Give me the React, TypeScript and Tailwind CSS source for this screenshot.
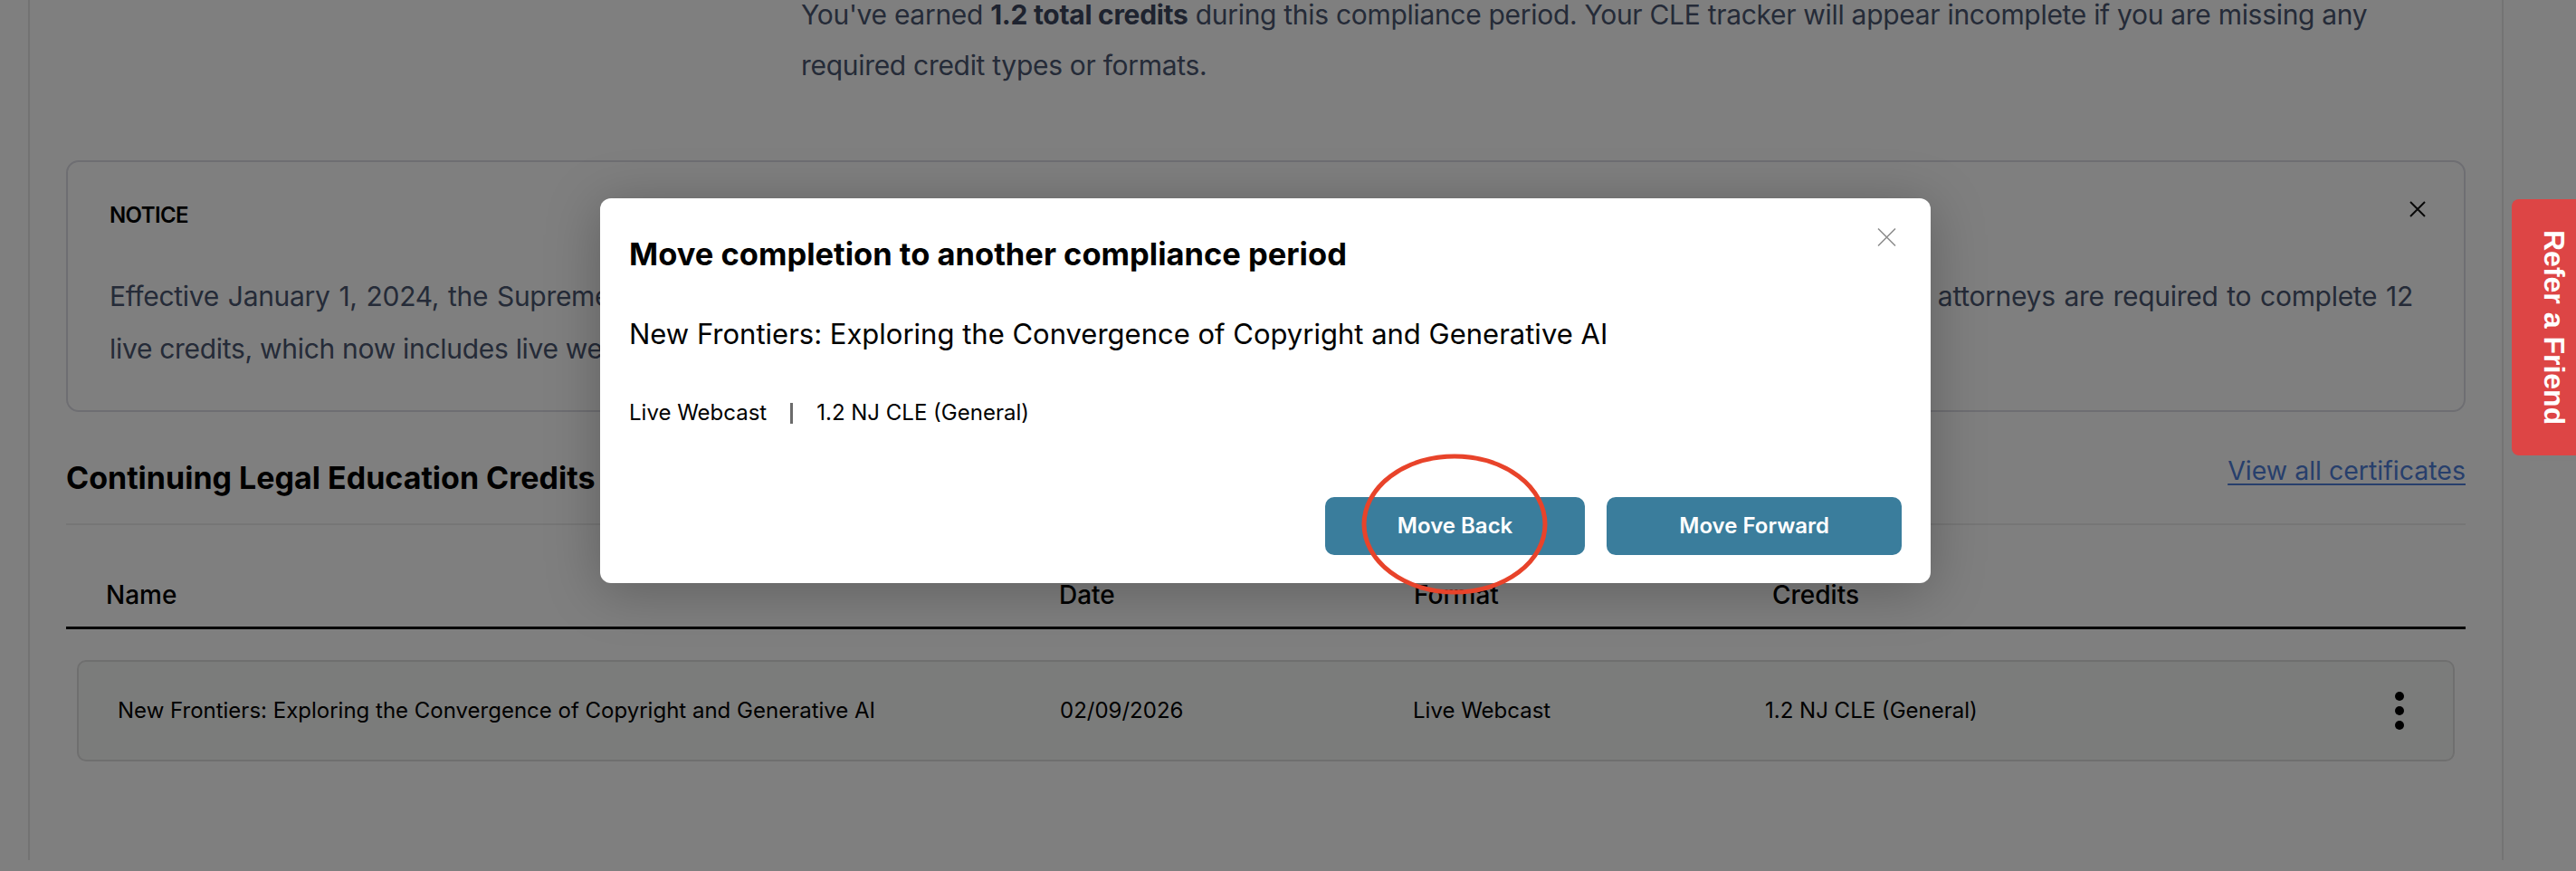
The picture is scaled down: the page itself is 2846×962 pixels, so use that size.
// Credits tracker page with the "move completion" dialog open over it.
export default function App() {
  return (
    <div className="relative h-[962px] w-[2846px] overflow-hidden bg-white font-['Inter',sans-serif] text-black">
      <div className="ml-[31px] h-full w-[2735px] border-x-2 border-[#e6e6e6] px-[40px]">
        <p className="ml-[812px] mt-[-12px] text-[30px] leading-[56px] tracking-[-0.3px] text-[#4a5670]">
          You've earned <span className="font-bold text-[#3d475e]">1.2 total credits</span> during this compliance
          period. Your CLE tracker will appear incomplete if you are missing any required credit types or formats.
        </p>

        <NoticeCard />
        <CreditsSection />
      </div>

      <div className="absolute inset-0 bg-black/50" />

      <MoveDialog />
      <ReferTab />
    </div>
  );
}

function NoticeCard() {
  return (
    <div className="mt-[77px] rounded-[14px] border-2 border-[#dcdce4] pb-[39px] pl-[46px] pr-[41px] pt-[43px]">
      <div className="flex items-start justify-between">
        <div className="text-[24px] font-semibold leading-[32px] tracking-tight">NOTICE</div>
        <svg viewBox="0 0 20 18" className="h-[18px] w-[20px]" fill="none" stroke="#111" strokeWidth="2">
          <path d="M2 1 18 17M18 1 2 17" />
        </svg>
      </div>
      <p className="mr-[15px] mt-[44px] text-[30px] leading-[58px] tracking-[-0.3px] text-[#4a5670]">
        <span className="block [text-align-last:justify]">
          Effective January 1, 2024, the Supreme Court of New Jersey amended its CLE rules for every two-year
          compliance period, and all New Jersey attorneys are required to complete 12
        </span>
        <span className="block">live credits, which now includes live webcasts and other interactive formats.</span>
      </p>
    </div>
  );
}

function CreditsSection() {
  return (
    <div>
      <div className="mt-[45px] flex items-start justify-between border-b-2 border-[#ececec] pb-[28px]">
        <h2 className="mt-[6px] text-[34px] font-bold leading-[44px]">Continuing Legal Education Credits</h2>
        <a className="text-[28.5px] leading-[40px] text-[#4f7fd9] underline underline-offset-4">View all certificates</a>
      </div>

      <div className="mt-[59px] grid grid-cols-[1053px_392px_396px_1fr] border-b-[3px] border-black pb-[17px] pl-[44px] text-[28px] font-medium leading-[36px]">
        <div>Name</div>
        <div>Date</div>
        <div>Format</div>
        <div>Credits</div>
      </div>

      <div className="mx-[12px] mt-[34px] grid h-[112px] grid-cols-[1041px_390px_389px_1fr_auto] items-center rounded-[10px] border-2 border-[#dedede] bg-[#f7f8f7] pl-[43px] pr-[53px] text-[24px]">
        <div>New Frontiers: Exploring the Convergence of Copyright and Generative AI</div>
        <div>02/09/2026</div>
        <div>Live Webcast</div>
        <div>1.2 NJ CLE (General)</div>
        <svg viewBox="0 0 12 44" className="h-[44px] w-[12px]" fill="#000">
          <circle cx="6" cy="6" r="5" />
          <circle cx="6" cy="22" r="5" />
          <circle cx="6" cy="38" r="5" />
        </svg>
      </div>
    </div>
  );
}

function MoveDialog() {
  return (
    <div className="absolute left-[663px] top-[219px] w-[1470px] rounded-[12px] bg-white px-[32px] pb-[31px] pt-[42px] shadow-[0_8px_60px_rgba(0,0,0,0.25)]">
      <svg
        viewBox="0 0 21 20"
        className="absolute right-[38px] top-[33px] h-[20px] w-[21px]"
        fill="none"
        stroke="#8c8c8c"
        strokeWidth="1.5"
      >
        <path d="M1 0.5 20 19.5M20 0.5 1 19.5" />
      </svg>

      <h1 className="text-[34.5px] font-bold leading-[40px]">Move completion to another compliance period</h1>
      <p className="mt-[48px] text-[31px] leading-[40px]">
        New Frontiers: Exploring the Convergence of Copyright and Generative AI
      </p>
      <div className="mt-[51px] flex items-center text-[24px] leading-[32px]">
        <span>Live Webcast</span>
        <span className="mx-[26px] h-[23px] w-[3px] bg-[#6b6b6b]" />
        <span>1.2 NJ CLE (General)</span>
      </div>

      <div className="mt-[77px] flex justify-end gap-[24px]">
        <button className="h-[64px] rounded-[10px] bg-[#3a7d9c] px-[80px] text-[24px] font-semibold text-white">
          Move Back
        </button>
        <button className="h-[64px] rounded-[10px] bg-[#3a7d9c] px-[80px] text-[24px] font-semibold text-white">
          Move Forward
        </button>
      </div>

      {/* hand-drawn highlight around the first button */}
      <svg className="pointer-events-none absolute left-[839px] top-[280px] h-[160px] w-[210px]" viewBox="0 0 210 160" fill="none">
        <ellipse cx="105" cy="80" rx="100" ry="75" stroke="#e8432a" strokeWidth="5" />
      </svg>
    </div>
  );
}

function ReferTab() {
  return (
    <div className="absolute right-[-23px] top-[220px] flex h-[283px] w-[94px] items-center justify-center rounded-l-[8px] bg-[#dd4545]">
      <span className="font-['Liberation_Sans',Arial,sans-serif] text-[32px] font-bold text-white [writing-mode:vertical-rl]">
        Refer a Friend
      </span>
    </div>
  );
}
